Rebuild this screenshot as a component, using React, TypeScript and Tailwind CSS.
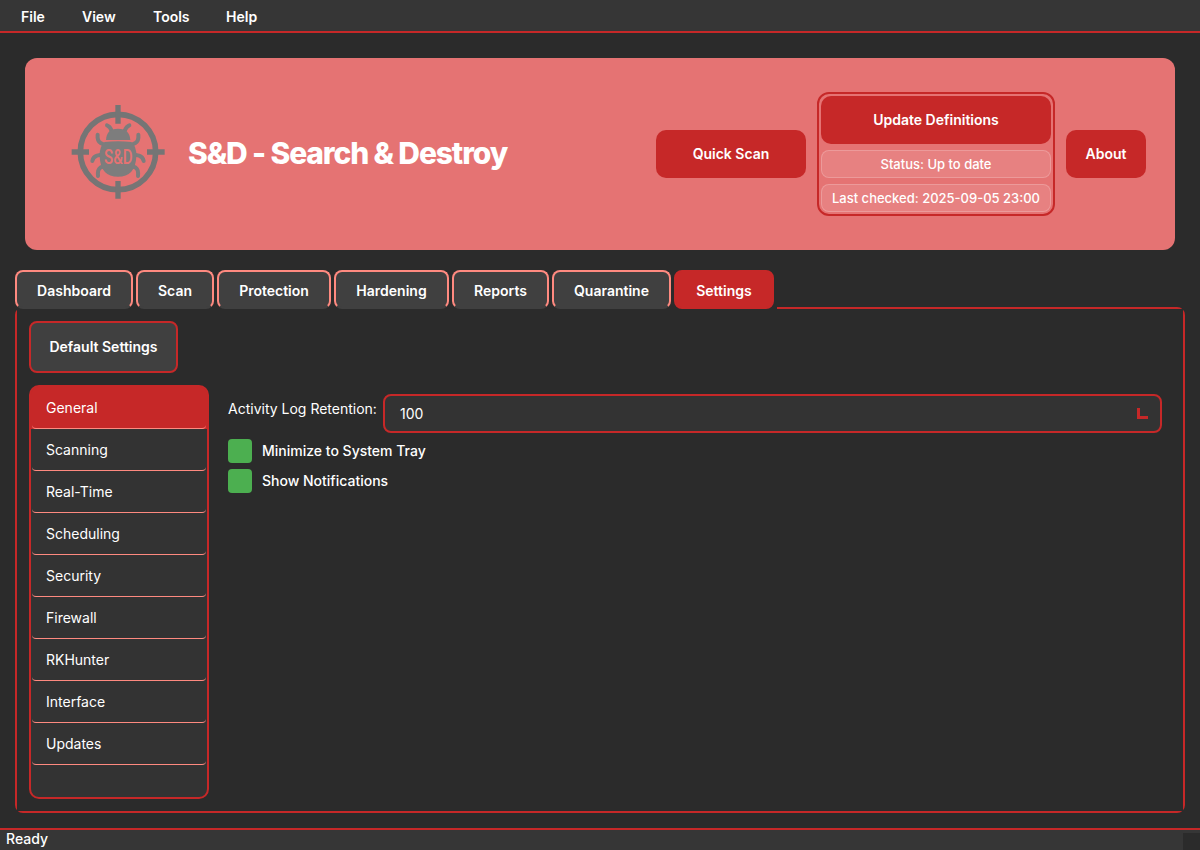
import React from "react";

const menus = [
  { label: "File", cls: "ml-[21px] w-[61px]" },
  { label: "View", cls: "w-[71px]" },
  { label: "Tools", cls: "w-[73px]" },
  { label: "Help", cls: "w-[60px]" },
];

const tabs = [
  { label: "Dashboard", width: "w-[118px]" },
  { label: "Scan", width: "w-[78px]" },
  { label: "Protection", width: "w-[114px]" },
  { label: "Hardening", width: "w-[115px]" },
  { label: "Reports", width: "w-[97px]" },
  { label: "Quarantine", width: "w-[119px]" },
  { label: "Settings", width: "w-[100px]" },
];

const sections = ["General", "Scanning", "Real-Time", "Scheduling", "Security", "Firewall", "RKHunter", "Interface", "Updates"];

function Logo() {
  return (
    <svg width="94" height="96" viewBox="33 27 282 288" className="block shrink-0">
      <circle cx="174" cy="171" r="113" fill="none" stroke="#757575" strokeWidth="17" />
      <path d="M174 30V86M174 258V311M35 171H87M261 171H314" fill="none" stroke="#757575" strokeWidth="16" />
      <g fill="none" stroke="#7d7d7d" strokeWidth="12" strokeLinecap="round" strokeLinejoin="round">
        <path d="M141 91Q150 94 155 107M208 91Q199 94 194 107" />
        <path d="M113 119Q111 137 122 144L138 152M235 119Q237 137 226 144L210 152" />
        <path d="M97 198Q99 186 111 182L124 179M251 198Q249 186 237 182L224 179" />
        <path d="M114 243Q112 224 121 218L134 212M234 243Q236 224 227 218L214 212" />
      </g>
      <path d="M138 135Q139 101 174 101Q209 101 211 135Z" fill="#7d7d7d" />
      <path d="M134 141Q174 137 214 141Q230 152 229 185Q226 245 174 245Q122 245 119 185Q118 152 134 141Z" fill="#7d7d7d" />
      <text x="175" y="207" textAnchor="middle" textLength="86" lengthAdjust="spacingAndGlyphs" fill="#e57373" fontFamily="Roboto, sans-serif" fontWeight="500" fontSize="62">S&amp;D</text>
    </svg>
  );
}

function Check({ label }: { label: string }) {
  return (
    <div className="flex h-[30px] items-center gap-[10px]">
      <span className="size-6 rounded-[4px] bg-[#4caf50]" />
      <span className="text-sm font-medium">{label}</span>
    </div>
  );
}

export default function App() {
  return (
    <div className="flex h-[850px] w-[1200px] flex-col overflow-hidden bg-[#2b2b2b] font-['Inter',sans-serif] text-sm text-white">
      <nav className="flex h-[33px] shrink-0 items-center border-b-2 border-[#c62828] bg-[#363636] font-semibold">
        {menus.map((m) => (
          <span key={m.label} className={`${m.cls} pt-[3px]`}>{m.label}</span>
        ))}
      </nav>

      <header className="mx-[25px] mt-[25px] flex h-[192px] shrink-0 items-center rounded-xl bg-[#e57373] pr-[29px] pl-[46px] font-semibold">
        <div className="-mt-1"><Logo /></div>
        <h1 className="-mt-0.5 ml-[23px] text-[30px] font-extrabold tracking-[-1.13px] whitespace-nowrap">S&amp;D - Search &amp; Destroy</h1>
        <div className="ml-auto flex items-center gap-[11px]">
          <button className="h-12 w-[150px] rounded-[10px] bg-[#c62828]">Quick Scan</button>
          <div className="flex h-[124px] w-[238px] flex-col gap-[6px] rounded-xl border-2 border-[#c62828] p-[2px]">
            <button className="h-12 shrink-0 rounded-[10px] bg-[#c62828]">Update Definitions</button>
            <div className="flex h-7 shrink-0 items-center justify-center rounded-lg border border-white/20 bg-white/10 text-[13px] font-medium">Status: Up to date</div>
            <div className="flex h-7 shrink-0 items-center justify-center rounded-lg border border-white/20 bg-white/10 text-[13px] font-medium">Last checked: 2025-09-05 23:00</div>
          </div>
          <button className="h-12 w-20 rounded-[10px] bg-[#c62828]">About</button>
        </div>
      </header>

      <main className="mx-[15px] mt-5 flex h-[543px] shrink-0 flex-col">
        <div className="relative z-10 -mb-[2px] flex h-[39px] w-[762px] shrink-0 gap-[3px] bg-[#2b2b2b]">
          {tabs.map((t) => (
            <button
              key={t.label}
              className={`${t.width} shrink-0 rounded-lg border-2 pt-[3px] font-semibold ${t.label === "Settings" ? "border-[#c62828] bg-[#c62828]" : "border-[#ff8a80] border-b-[#404040] bg-[#404040]"}`}
            >
              {t.label}
            </button>
          ))}
        </div>

        <section className="h-[506px] rounded-lg border-2 border-[#c62828]">
          <div className="flex h-full flex-col bg-[#2b2b2b] px-3 pt-3">
            <button className="h-[52px] w-[149px] shrink-0 rounded-lg border-2 border-[#c62828] bg-[#404040] font-semibold">Default Settings</button>
            <div className="mt-3 flex">
              <ul className="h-[414px] w-[180px] shrink-0 overflow-hidden rounded-[10px] border-2 border-[#c62828] bg-[linear-gradient(#c62828_20px,#333333_20px)]">
                {sections.map((s, i) => (
                  <li key={s} className={i === 0 ? "bg-[#c62828]" : "bg-[#333333]"}>
                    <div className="mx-px flex h-[42px] items-center rounded-[4px] border-b border-[#ff8a80] pl-[14px]">{s}</div>
                  </li>
                ))}
              </ul>
              <div className="ml-[19px] grow pt-[9px]">
                <div className="flex gap-[6px]">
                  <label className="w-[149px] pt-[5px] whitespace-nowrap">Activity Log Retention:</label>
                  <div className="flex h-[39px] w-[779px] items-center justify-between rounded-lg border-2 border-[#c62828] bg-[#333333] pr-3 pl-[15px]">
                    <span>100</span>
                    <span className="size-[11px] border-b-[3px] border-l-[3px] border-[#c62828]" />
                  </div>
                </div>
                <div className="mt-[3px]">
                  <Check label="Minimize to System Tray" />
                  <Check label="Show Notifications" />
                </div>
              </div>
            </div>
          </div>
        </section>
      </main>

      <footer className="mt-auto flex h-[22px] shrink-0 border-t-2 border-[#c62828] bg-[#363636]">
        <span className="grow pl-[6px] leading-[17px] font-medium">Ready</span>
        <span className="mt-[3px] w-[17px] bg-[#2b2b2b]" />
      </footer>
    </div>
  );
}
